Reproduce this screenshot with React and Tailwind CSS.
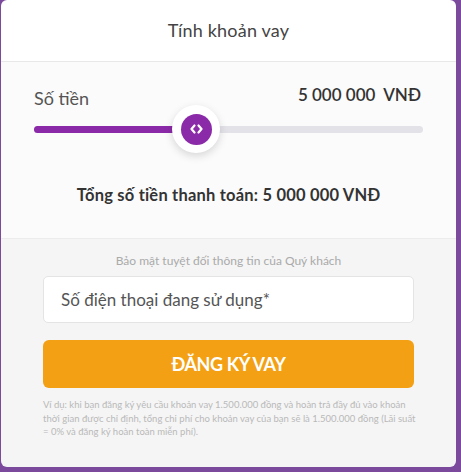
export default function App() {
  const font = { fontFamily: "Lato, 'Noto Sans', sans-serif" };
  return (
    <div className="w-[461px] h-[472px] bg-[#7b4a9c] pl-px pr-[5px] pb-[5px]" style={font}>
      <div className="w-[455px] h-[467px] rounded-md overflow-hidden flex flex-col">
        {/* title bar */}
        <div className="h-[62px] shrink-0 bg-white border-b border-[#e8e8e8] flex items-center justify-center">
          <span className="text-[18px] text-[#444] tracking-[0.2px]">Tính khoản vay</span>
        </div>

        {/* amount slider */}
        <div className="h-[177px] shrink-0 bg-[#fbfbfb] border-b border-[#ececec] px-[33px] flex flex-col">
          <div className="flex items-end justify-between pt-[24px] h-[50px]">
            <span className="text-[18px] text-[#555]">Số tiền</span>
            <span className="text-[17px] font-semibold text-[#333] pr-[2px] mb-[5px]">5 000 000&nbsp;&nbsp;VNĐ</span>
          </div>
          <div className="relative h-[42px] mt-[-4px] flex items-center">
            <div className="w-full h-[7px] rounded-full bg-[#e2e2e8]">
              <div className="h-full w-[162px] rounded-full bg-[#8b2aa8]" />
            </div>
            <div className="absolute left-[138px] top-[-3px] w-[48px] h-[48px] rounded-full bg-white shadow-[0_3px_8px_rgba(0,0,0,0.15)] flex items-center justify-center">
              <div className="w-[31px] h-[31px] rounded-full bg-[#8b2aa8] flex items-center justify-center">
                <svg width="13" height="10" viewBox="0 0 13 10" fill="none" stroke="white" strokeWidth="2.2" strokeLinecap="round" strokeLinejoin="round">
                  <path d="M4.5 1.5 L1.5 5 L4.5 8.5" />
                  <path d="M8.5 1.5 L11.5 5 L8.5 8.5" />
                </svg>
              </div>
            </div>
          </div>
          <div className="mt-[33px] text-center text-[16.5px] font-bold text-[#333] tracking-[0.2px]">
            Tổng số tiền thanh toán: 5 000 000 VNĐ
          </div>
        </div>

        {/* registration form */}
        <div className="flex-1 bg-[#f5f5f5] px-[42px] flex flex-col">
          <div className="text-center text-[12px] text-[#aaa] mt-[13px]">Bảo mật tuyệt đối thông tin của Quý khách</div>
          <input
            className="mt-[6px] h-[47px] w-full bg-white border border-[#e4e4e4] rounded-[5px] px-[17px] text-[17px] text-[#555] placeholder:text-[#555] outline-none"
            placeholder="Số điện thoại đang sử dụng*"
            style={font}
          />
          <button
            className="mt-[17px] h-[48px] w-full rounded-[6px] bg-[#f4a014] text-white text-[18px] font-bold tracking-[-0.4px]"
            style={font}
          >
            ĐĂNG KÝ VAY
          </button>
          <p className="mt-[10px] -mr-[2px] text-[9.5px] leading-[13.5px] text-[#b9b9b9]">
            Ví dụ: khi bạn đăng ký yêu cầu khoản vay 1.500.000 đồng và hoàn trả đầy đủ vào khoản thời gian được chỉ định, tổng chi phí cho khoản vay của bạn sẽ là 1.500.000 đồng (Lãi suất = 0% và đăng ký hoàn toàn miễn phí).
          </p>
        </div>
      </div>
    </div>
  );
}
